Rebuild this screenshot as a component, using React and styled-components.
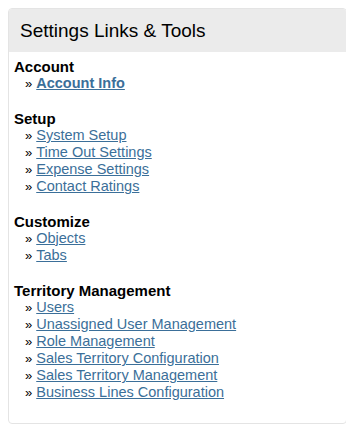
import { createGlobalStyle, styled } from "styled-components";

const GlobalStyle = createGlobalStyle`
  body {
    margin: 8px;
    background: #ffffff;
    font-family: "Liberation Sans", Arial, sans-serif;
  }
`;

const Card = styled.div`
  width: 337px;
  border: 1px solid #e4e4e4;
  border-radius: 4px;
  overflow: hidden;
`;

const Header = styled.div`
  height: 43px;
  background: #ebebeb;
  display: flex;
  align-items: center;
  padding-left: 11px;
  font-size: 19px;
  color: #000;
`;

const Body = styled.div`
  padding: 6px 5px 22px;
`;

const Section = styled.div`
  & + & {
    margin-top: 18px;
  }
`;

const Heading = styled.div`
  font-size: 15px;
  font-weight: bold;
  line-height: 17px;
  color: #000;
`;

const List = styled.ul`
  list-style: none;
  margin: 0;
  padding: 0 0 0 11px;
`;

const Item = styled.li`
  font-size: 14.5px;
  line-height: 17px;
  &::before {
    content: "»";
    font-size: 13px;
    color: #000;
    margin-right: 4px;
  }
`;

const Link = styled.a`
  color: #3b6f99;
  text-decoration: underline;
  font-weight: ${(p) => (p.$bold ? "bold" : "normal")};
`;

const sections = [
  { title: "Account", links: [{ label: "Account Info", bold: true }] },
  {
    title: "Setup",
    links: [
      { label: "System Setup" },
      { label: "Time Out Settings" },
      { label: "Expense Settings" },
      { label: "Contact Ratings" },
    ],
  },
  { title: "Customize", links: [{ label: "Objects" }, { label: "Tabs" }] },
  {
    title: "Territory Management",
    links: [
      { label: "Users" },
      { label: "Unassigned User Management" },
      { label: "Role Management" },
      { label: "Sales Territory Configuration" },
      { label: "Sales Territory Management" },
      { label: "Business Lines Configuration" },
    ],
  },
];

export default function App() {
  return (
    <>
      <GlobalStyle />
      <Card>
        <Header>Settings Links &amp; Tools</Header>
        <Body>
          {sections.map((s) => (
            <Section key={s.title}>
              <Heading>{s.title}</Heading>
              <List>
                {s.links.map((l) => (
                  <Item key={l.label}>
                    <Link href="#" $bold={l.bold}>
                      {l.label}
                    </Link>
                  </Item>
                ))}
              </List>
            </Section>
          ))}
        </Body>
      </Card>
    </>
  );
}
